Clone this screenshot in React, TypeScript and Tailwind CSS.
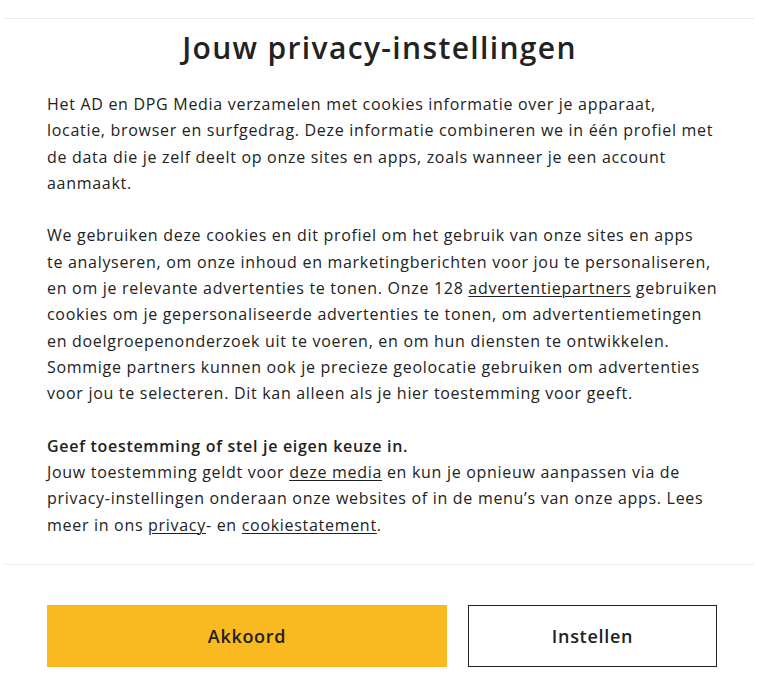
const font = { fontFamily: '"Open Sans", "Liberation Sans", sans-serif' };

function Link({ children }: { children: React.ReactNode }) {
  return <a className="underline underline-offset-2 decoration-1">{children}</a>;
}

export default function App() {
  return (
    <div className="min-h-screen bg-white text-[#222] px-[5px] pt-[18px]" style={font}>
      <div className="border-t border-[#ebebeb]">
        <h1 className="text-center text-[30px] font-semibold leading-[36px] pt-[11px] tracking-[1.35px]">
          Jouw privacy-instellingen
        </h1>
        <div className="px-[42px] pt-[25px] pb-[26px] text-[16px] leading-[26.3px] tracking-[0.7px] whitespace-nowrap">
          <p>
            Het AD en DPG Media verzamelen met cookies informatie over je apparaat,<br />
            locatie, browser en surfgedrag. Deze informatie combineren we in één profiel met<br />
            de data die je zelf deelt op onze sites en apps, zoals wanneer je een account<br />
            aanmaakt.
          </p>
          <p className="mt-[26.3px]">
            We gebruiken deze cookies en dit profiel om het gebruik van onze sites en apps<br />
            te analyseren, om onze inhoud en marketingberichten voor jou te personaliseren,<br />
            en om je relevante advertenties te tonen. Onze 128 <Link>advertentiepartners</Link> gebruiken<br />
            cookies om je gepersonaliseerde advertenties te tonen, om advertentiemetingen<br />
            en doelgroepenonderzoek uit te voeren, en om hun diensten te ontwikkelen.<br />
            Sommige partners kunnen ook je precieze geolocatie gebruiken om advertenties<br />
            voor jou te selecteren. Dit kan alleen als je hier toestemming voor geeft.
          </p>
          <p className="mt-[26.3px] font-semibold">Geef toestemming of stel je eigen keuze in.</p>
          <p>
            Jouw toestemming geldt voor <Link>deze media</Link> en kun je opnieuw aanpassen via de<br />
            privacy-instellingen onderaan onze websites of in de menu’s van onze apps. Lees<br />
            meer in ons <Link>privacy</Link>- en <Link>cookiestatement</Link>.
          </p>
        </div>
      </div>
      <div className="border-t border-[#ebebeb] pl-[42px] pt-[40px] flex gap-[21px]">
        <button className="shrink-0 w-[400px] h-[62px] bg-[#f9b920] text-[18px] font-semibold text-[#222] tracking-[0.7px]">
          Akkoord
        </button>
        <button className="shrink-0 w-[249px] h-[62px] border border-[#222] bg-white text-[18px] font-semibold text-[#222] tracking-[0.7px]">
          Instellen
        </button>
      </div>
    </div>
  );
}
